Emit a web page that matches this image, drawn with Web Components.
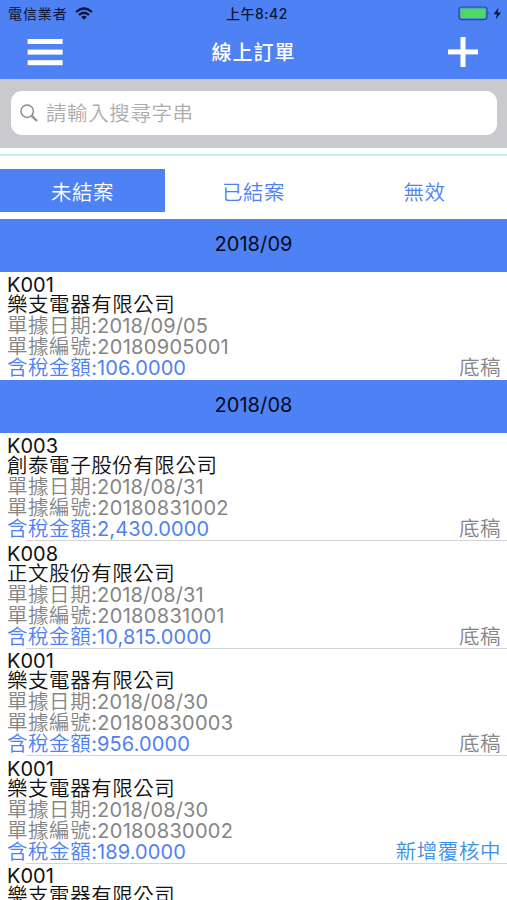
<!DOCTYPE html>
<html lang="zh-Hant">
<head>
<meta charset="UTF-8">
<title>線上訂單</title>
<style>
    html, body { margin: 0; height: 100%; overflow: hidden; background: #fff; }
    body { font-family: Inter, "Noto Sans CJK TC", sans-serif; }
</style>
</head>
<body>
<order-app></order-app>
<script>
class StatusBar extends HTMLElement {
    constructor() {
        super();
        this.attachShadow({ mode: 'open' });
        this.shadowRoot.innerHTML = `
            <style>
                :host {
                    display: grid;
                    grid-template-columns: 1fr auto 1fr;
                    align-items: center;
                    height: 26px;
                    padding: 0 4px 0 8px;
                    font-size: 14px;
                    line-height: 20px;
                    font-weight: 500;
                    color: #0a1433;
                }
                div { display: flex; align-items: center; }
                .carrier { gap: 7px; letter-spacing: 0.9px; font-weight: 400; }
                .carrier span, .time { padding-top: 2px; }
                .time { letter-spacing: 0.5px; padding-left: 3px; }
                .power { justify-content: flex-end; }
                svg { display: block; }
            </style>
            <div class="carrier">
                <span>電信業者</span>
                <svg width="18" height="13" viewBox="0 0 18 13" fill="none" stroke="#0a1433" stroke-width="2.3">
                    <path d="M1.2 5 Q9 -2 16.8 5"/>
                    <path d="M4 8 Q9 3.6 14 8"/>
                    <path d="M9 12.8 L6.2 9.9 Q9 7.7 11.8 9.9 Z" fill="#0a1433" stroke="none"/>
                </svg>
            </div>
            <div class="time">上午8:42</div>
            <div class="power">
                <svg width="45" height="15" viewBox="0 0 45 15">
                    <rect x="1" y="1" width="28" height="12.6" rx="2.6" fill="none" stroke="#2c4c96" stroke-width="1.2"/>
                    <rect x="2.4" y="2.4" width="25.2" height="9.8" rx="1.4" fill="#4cd964"/>
                    <path d="M30.6 5.2 Q32.2 7.3 30.6 9.4 Z" fill="#2c4c96"/>
                    <path d="M40.6 1.6 L35.6 8.2 H39 L37.6 13.4 L43 6.5 H39.6 Z" fill="#0a1433"/>
                </svg>
            </div>
        `;
    }
}
customElements.define('status-bar', StatusBar);

class NavBar extends HTMLElement {
    constructor() {
        super();
        this.attachShadow({ mode: 'open' });
        this.shadowRoot.innerHTML = `
            <style>
                :host {
                    display: grid;
                    grid-template-columns: 1fr auto 1fr;
                    align-items: center;
                    box-sizing: border-box;
                    height: 53px;
                    padding: 0 29px 1px 27px;
                    color: #fff;
                }
                h1 {
                    margin: 0;
                    padding: 2px 0 0 2px;
                    font-size: 20px;
                    font-weight: 500;
                    letter-spacing: 1px;
                    line-height: 50px;
                }
                svg { display: block; }
                .add { justify-self: end; }
            </style>
            <svg width="36" height="28" viewBox="0 0 36 28" fill="#fff">
                <rect x="0.6" y="1" width="35" height="5"/>
                <rect x="0.6" y="11.6" width="35" height="5"/>
                <rect x="0.6" y="22.2" width="35" height="5"/>
            </svg>
            <h1><slot></slot></h1>
            <svg class="add" width="30" height="30" viewBox="0 0 30 30" fill="#fff">
                <rect x="0" y="12.4" width="30" height="5"/>
                <rect x="12.5" y="0" width="5" height="30"/>
            </svg>
        `;
    }
}
customElements.define('nav-bar', NavBar);

class SearchField extends HTMLElement {
    constructor() {
        super();
        this.attachShadow({ mode: 'open' });
        this.shadowRoot.innerHTML = `
            <style>
                :host {
                    display: block;
                    box-sizing: border-box;
                    height: 69px;
                    padding: 12px 10px 13px 11px;
                    background: #c9c9ce;
                }
                .field {
                    display: flex;
                    align-items: center;
                    gap: 8px;
                    height: 44px;
                    padding: 0 0 0 9px;
                    box-sizing: border-box;
                    border-radius: 11px;
                    background: #fff;
                    color: #adadad;
                    font-size: 20.5px;
                    line-height: 43px;
                    font-weight: 350;
                    letter-spacing: 0.6px;
                }
            </style>
            <div class="field">
                <svg width="18" height="18" viewBox="0 0 18 18" fill="none" stroke="#8e8e93">
                    <circle cx="7.2" cy="7.2" r="6.2" stroke-width="1.5"/>
                    <path d="M11.6 11.6 L17 17" stroke-width="2.2"/>
                </svg>
                <span><slot></slot></span>
            </div>
        `;
    }
}
customElements.define('search-field', SearchField);

class TabBar extends HTMLElement {
    constructor() {
        super();
        this.attachShadow({ mode: 'open' });
        this.shadowRoot.innerHTML = `
            <style>
                :host {
                    display: grid;
                    grid-template-columns: 165px 1fr 165px;
                    box-sizing: border-box;
                    height: 71px;
                    padding: 15px 0 6px;
                    position: relative;
                    border-top: 6px solid #fff;
                }
                :host::before {
                    content: "";
                    position: absolute;
                    top: 0;
                    left: 0;
                    right: 0;
                    height: 2px;
                    background: #c4eef8;
                }
                ::slotted(span) {
                    display: block;
                    box-sizing: border-box;
                    height: 43px;
                    padding-top: 3px;
                    line-height: 42px;
                    text-align: center;
                    font-size: 20.5px;
                    font-weight: 350;
                    letter-spacing: 0.5px;
                    color: #4f81f2;
                }
                ::slotted(.active) { background: #4e81f4; color: #fff; }
            </style>
            <slot></slot>
        `;
    }
}
customElements.define('tab-bar', TabBar);

class MonthHeader extends HTMLElement {
    constructor() {
        super();
        this.attachShadow({ mode: 'open' });
        this.shadowRoot.innerHTML = `
            <style>
                :host {
                    display: block;
                    height: 53.3px;
                    line-height: 51px;
                    background: #4e81f4;
                    color: #060a18;
                    font-size: 20px;
                    letter-spacing: 0.1px;
                    text-align: center;
                }
            </style>
            <slot></slot>
        `;
    }
}
customElements.define('month-header', MonthHeader);

class OrderItem extends HTMLElement {
    constructor() {
        super();
        this.attachShadow({ mode: 'open' });
    }

    connectedCallback() {
        const { code, company, date, number, amount, status, tone } = this.order;
        this.shadowRoot.innerHTML = `
            <style>
                :host {
                    display: block;
                    position: relative;
                    box-sizing: border-box;
                    height: 107.5px;
                    padding: 6.1px 6px 0 7px;
                    font-size: 20px;
                    line-height: 21px;
                    color: #858585;
                    white-space: nowrap;
                }
                :host(:not([last]))::after {
                    content: "";
                    position: absolute;
                    left: 26px;
                    right: 0;
                    bottom: -0.5px;
                    height: 1px;
                    background: #d4d4d6;
                }
                div { height: 21px; }
                .zh { font-size: 20.5px; font-weight: 350; letter-spacing: 0.55px; }
                .code { height: 15px; line-height: 15px; color: #111; }
                .company { height: 22px; line-height: 23px; color: #111; }
                .date { letter-spacing: 0.15px; }
                .number { letter-spacing: 0.3px; }
                .total {
                    display: flex;
                    justify-content: space-between;
                    letter-spacing: 0.1px;
                    color: #4f81f2;
                }
                .status { color: #858585; }
                .status.review { color: #3b92ea; }
            </style>
            <div class="code">${code}</div>
            <div class="company zh">${company}</div>
            <div class="date"><span class="zh">單據日期</span>:${date}</div>
            <div class="number"><span class="zh">單據編號</span>:${number}</div>
            <div class="total">
                <span><span class="zh">含稅金額</span>:${amount}</span>
                <span class="status zh ${tone || ''}">${status}</span>
            </div>
        `;
    }
}
customElements.define('order-item', OrderItem);

const months = [
    { month: '2018/09', orders: [
        { code: 'K001', company: '樂支電器有限公司', date: '2018/09/05', number: '20180905001', amount: '106.0000', status: '底稿' }
    ] },
    { month: '2018/08', orders: [
        { code: 'K003', company: '創泰電子股份有限公司', date: '2018/08/31', number: '20180831002', amount: '2,430.0000', status: '底稿' },
        { code: 'K008', company: '正文股份有限公司', date: '2018/08/31', number: '20180831001', amount: '10,815.0000', status: '底稿' },
        { code: 'K001', company: '樂支電器有限公司', date: '2018/08/30', number: '20180830003', amount: '956.0000', status: '底稿' },
        { code: 'K001', company: '樂支電器有限公司', date: '2018/08/30', number: '20180830002', amount: '189.0000', status: '新增覆核中', tone: 'review' },
        { code: 'K001', company: '樂支電器有限公司', date: '', number: '', amount: '', status: '' }
    ] }
];

class OrderList extends HTMLElement {
    constructor() {
        super();
        this.attachShadow({ mode: 'open' });
        this.shadowRoot.innerHTML = `<style>:host { display: block; }</style>`;
        months.forEach(({ month, orders }) => {
            const header = document.createElement('month-header');
            header.textContent = month;
            this.shadowRoot.appendChild(header);
            orders.forEach((order, i) => {
                const item = document.createElement('order-item');
                item.order = order;
                item.toggleAttribute('last', i === orders.length - 1);
                this.shadowRoot.appendChild(item);
            });
        });
    }
}
customElements.define('order-list', OrderList);

class OrderApp extends HTMLElement {
    constructor() {
        super();
        this.attachShadow({ mode: 'open' });
        this.shadowRoot.innerHTML = `
            <style>
                :host { display: block; height: 900px; overflow: hidden; }
                header { background: #4e81f4; }
            </style>
            <header>
                <status-bar></status-bar>
                <nav-bar>線上訂單</nav-bar>
            </header>
            <search-field>請輸入搜尋字串</search-field>
            <tab-bar>
                <span class="active">未結案</span>
                <span>已結案</span>
                <span>無效</span>
            </tab-bar>
            <order-list></order-list>
        `;
    }
}
customElements.define('order-app', OrderApp);
</script>
</body>
</html>
